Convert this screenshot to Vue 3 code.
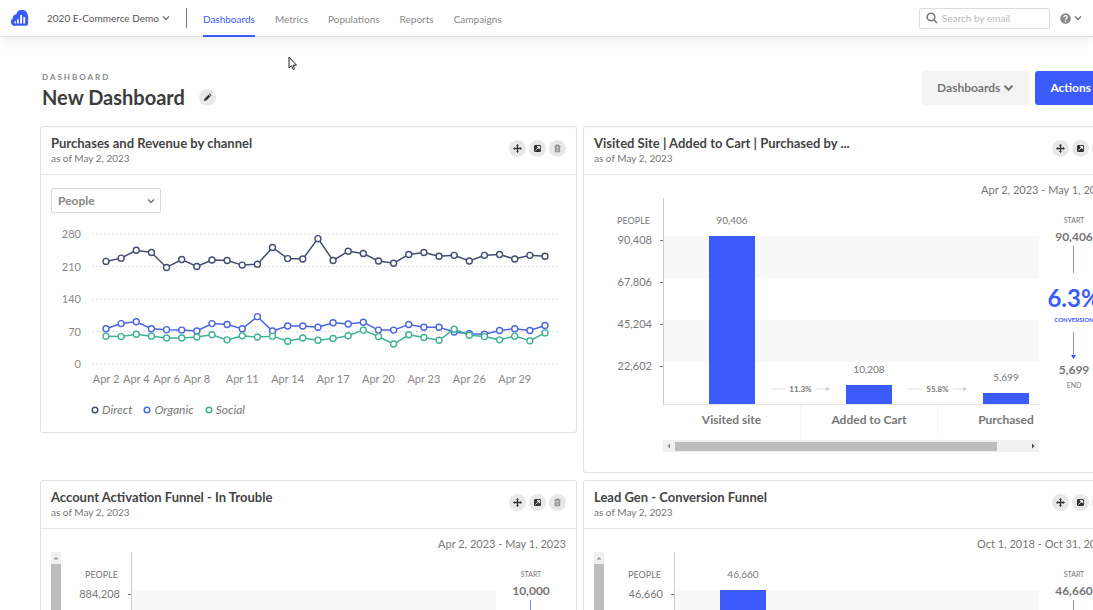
<script setup>
import { ref } from 'vue'

const navItems = ['Dashboards', 'Metrics', 'Populations', 'Reports', 'Campaigns']
const measure = ref('People')
const search = ref('')

const series = [
  {
    name: 'Organic',
    color: '#4a66e0',
    values: [76, 87, 91, 76, 74, 73, 71, 87, 85, 76, 102, 71, 82, 82, 79, 89, 86, 90, 73, 73, 85, 79, 79, 69, 65, 64, 72, 76, 72, 83]
  },
  {
    name: 'Social',
    color: '#3fb394',
    values: [60, 59, 64, 60, 56, 56, 58, 63, 52, 61, 58, 60, 49, 56, 51, 55, 61, 73, 59, 43, 63, 57, 51, 75, 62, 59, 52, 60, 50, 67]
  },
  {
    name: 'Direct',
    color: '#434c72',
    values: [221, 228, 245, 240, 208, 225, 210, 224, 223, 213, 215, 251, 227, 226, 270, 223, 243, 238, 222, 217, 236, 240, 232, 234, 222, 234, 236, 226, 234, 232]
  }
]
const legend = [series[2], series[0], series[1]]
const yTicks = [280, 210, 140, 70, 0]
const labelledDays = [2, 4, 6, 8, 11, 14, 17, 20, 23, 26, 29]

const dayX = (day) => 55 + ((day - 2) * 439) / 29
const valueY = (value) => 140 - (value * 130) / 280
const linePoints = (values) => values.map((v, i) => `${dayX(i + 2)},${valueY(v)}`).join(' ')

const funnels = [
  {
    title: 'Visited Site | Added to Cart | Purchased by ...',
    range: 'Apr 2, 2023 - May 1, 2023',
    ticks: ['90,408', '67,806', '45,204', '22,602'],
    max: 90408,
    steps: [
      { name: 'Visited site', label: '90,406', value: 90406, next: '11.3%' },
      { name: 'Added to Cart', label: '10,208', value: 10208, next: '55.8%' },
      { name: 'Purchased', label: '5,699', value: 5699 }
    ],
    start: '90,406',
    rate: '6.3%',
    end: '5,699',
    tall: false
  },
  {
    title: 'Account Activation Funnel - In Trouble',
    range: 'Apr 2, 2023 - May 1, 2023',
    ticks: ['884,208'],
    max: 884208,
    steps: [],
    start: '10,000',
    tall: true
  },
  {
    title: 'Lead Gen - Conversion Funnel',
    range: 'Oct 1, 2018 - Oct 31, 2018',
    ticks: ['46,660'],
    max: 46660,
    steps: [{ name: '', label: '46,660', value: 46660 }],
    start: '46,660',
    tall: true
  }
]
const barHeight = (funnel, step) => `${Math.round((step.value / funnel.max) * 168)}px`
</script>

<template>
  <div class="page">
    <header class="topbar">
      <a class="logo" href="#" aria-label="Home">
        <svg width="18" height="18" viewBox="0 0 18 18">
          <path d="M4.500 16.800A4 4 0 0 1 1.800 9.400A4 4 0 0 1 5.300 5.300A5.700 5.700 0 0 1 16.300 4.600Q17.200 6.500 17.200 9V14.300Q17.200 16.800 14.700 16.800Z" fill="#3b5bfd" />
          <path d="M6.900 14.500V10.500M10.100 14.500V6M13.200 14.500V8" stroke="#fff" stroke-width="1.800" fill="none" />
          <path d="M4.200 14.500v-2.300" stroke="#fff" stroke-width="1.300" />
        </svg>
      </a>
      <button class="project" type="button">
        2020 E-Commerce Demo
        <svg width="8" height="6" viewBox="0 0 8 6"><path d="M1 1.500l3 3 3-3" class="chev" /></svg>
      </button>
      <nav class="nav">
        <a v-for="(item, i) in navItems" :key="item" href="#" :class="{ active: i === 0 }">{{ item }}</a>
      </nav>
      <label class="search">
        <svg width="12" height="12" viewBox="0 0 12 12"><circle cx="5" cy="5" r="3.800" /><path d="M8 8l3 3" /></svg>
        <input v-model="search" type="text" placeholder="Search by email" aria-label="Search by email" />
      </label>
      <button class="help" type="button" aria-label="Help">
        <svg width="11" height="11" viewBox="0 0 11 11">
          <circle cx="5.500" cy="5.500" r="5.300" fill="#888" />
          <path d="M3.800 4.300a1.700 1.600 0 1 1 2.500 1.300q-.8.400-.8 1.100" fill="none" stroke="#fff" stroke-width="1.300" />
          <circle cx="5.500" cy="8.300" r=".8" fill="#fff" />
        </svg>
        <svg width="8" height="6" viewBox="0 0 8 6"><path d="M1 1.500l3 3 3-3" class="chev" /></svg>
      </button>
    </header>

    <main class="content">
      <section class="heading">
        <div class="heading-text">
          <p>DASHBOARD</p>
          <div class="title-row">
            <h1>New Dashboard</h1>
            <button class="round" type="button" aria-label="Rename">
              <svg width="9" height="9" viewBox="0 0 9 9"><path d="M1 8l.5-2.300 4-4 1.800 1.800-4 4zM6 1.200l.7-.7 1.800 1.800-.7.700z" fill="#333" /></svg>
            </button>
          </div>
        </div>
        <button class="btn" type="button">
          Dashboards
          <svg width="11" height="8" viewBox="0 0 11 8"><path d="M1.500 1.800l4 4 4-4" fill="none" stroke="currentColor" stroke-width="2.200" /></svg>
        </button>
        <button class="btn primary" type="button">
          Actions
          <svg width="11" height="8" viewBox="0 0 11 8"><path d="M1.500 1.800l4 4 4-4" fill="none" stroke="currentColor" stroke-width="2.200" /></svg>
        </button>
      </section>

      <div class="grid">
        <article class="card">
          <div class="card-head">
            <div>
              <h2>Purchases and Revenue by channel</h2>
              <p>as of May 2, 2023</p>
            </div>
            <div class="tools">
              <button class="round" type="button" aria-label="Move">
                <svg width="9" height="9" viewBox="0 0 9 9"><path d="M4.500 1v7M1 4.500h7" stroke="#333" stroke-width="1.300" /><path d="M4.500 0L6 1.800H3zM4.500 9L6 7.200H3zM0 4.500L1.800 3v3zM9 4.500L7.200 3v3z" fill="#333" /></svg>
              </button>
              <button class="round" type="button" aria-label="Open">
                <svg width="9" height="9" viewBox="0 0 9 9"><rect x="1" y="1" width="7" height="7" rx="1.300" fill="#333" /><path d="M4 2.400h2.700V5zM2.500 6.500L5.500 3.500" fill="#fff" stroke="#fff" stroke-width=".8" /></svg>
              </button>
              <button class="round" type="button" aria-label="Delete">
                <svg width="9" height="9" viewBox="0 0 9 9"><path d="M1.500 2.200h6M3.300 2V1h2.400v1M2.300 2.500v5.300h4.400V2.500M3.800 3.500v3.300M5.200 3.500v3.300" fill="none" stroke="#777" stroke-width=".9" /></svg>
              </button>
            </div>
          </div>

          <div class="trend">
            <div class="select">
              <select v-model="measure" aria-label="Measure">
                <option>People</option>
                <option>Revenue</option>
              </select>
              <svg width="8" height="6" viewBox="0 0 8 6"><path d="M1 1.500l3 3 3-3" class="chev" /></svg>
            </div>
            <svg class="plot-lines" viewBox="0 0 515 168">
              <g v-for="tick in yTicks" :key="tick">
                <line x1="41" x2="509" :y1="valueY(tick)" :y2="valueY(tick)" class="grid-line" />
                <text x="30" :y="valueY(tick) + 4" text-anchor="end">{{ tick }}</text>
              </g>
              <text v-for="day in labelledDays" :key="day" :x="dayX(day)" y="159" text-anchor="middle">Apr {{ day }}</text>
              <g v-for="line in series" :key="line.name" :stroke="line.color">
                <polyline :points="linePoints(line.values)" fill="none" stroke-width="1.500" />
                <circle v-for="(v, i) in line.values" :key="i" :cx="dayX(i + 2)" :cy="valueY(v)" r="3" fill="#fff" stroke-width="1.400" />
              </g>
            </svg>
            <ul class="legend">
              <li v-for="line in legend" :key="line.name">
                <svg width="8" height="8" viewBox="0 0 8 8"><circle cx="4" cy="4" r="2.800" fill="#fff" :stroke="line.color" stroke-width="1.500" /></svg>
                {{ line.name }}
              </li>
            </ul>
          </div>
        </article>

        <article v-for="funnel in funnels" :key="funnel.title" class="card">
          <div class="card-head">
            <div>
              <h2>{{ funnel.title }}</h2>
              <p>as of May 2, 2023</p>
            </div>
            <div class="tools">
              <button class="round" type="button" aria-label="Move">
                <svg width="9" height="9" viewBox="0 0 9 9"><path d="M4.500 1v7M1 4.500h7" stroke="#333" stroke-width="1.300" /><path d="M4.500 0L6 1.800H3zM4.500 9L6 7.200H3zM0 4.500L1.800 3v3zM9 4.500L7.200 3v3z" fill="#333" /></svg>
              </button>
              <button class="round" type="button" aria-label="Open">
                <svg width="9" height="9" viewBox="0 0 9 9"><rect x="1" y="1" width="7" height="7" rx="1.300" fill="#333" /><path d="M4 2.400h2.700V5zM2.500 6.500L5.500 3.500" fill="#fff" stroke="#fff" stroke-width=".8" /></svg>
              </button>
              <button class="round" type="button" aria-label="Delete">
                <svg width="9" height="9" viewBox="0 0 9 9"><path d="M1.500 2.200h6M3.300 2V1h2.400v1M2.300 2.500v5.300h4.400V2.500M3.800 3.500v3.300M5.200 3.500v3.300" fill="none" stroke="#777" stroke-width=".9" /></svg>
              </button>
            </div>
          </div>

          <p class="range">{{ funnel.range }}</p>
          <div class="funnel" :class="{ tall: funnel.tall }">
            <div v-if="funnel.tall" class="vbar">
              <svg width="10" height="12" viewBox="0 0 10 12"><path d="M2.500 7.500h5L5 5z" fill="#999" /></svg>
              <i></i>
            </div>
            <div class="axis">
              <span class="unit">PEOPLE</span>
              <span v-for="tick in funnel.ticks" :key="tick" class="tick">{{ tick }}</span>
            </div>
            <div class="stage">
              <div class="plot">
                <div class="bars">
                  <template v-for="step in funnel.steps" :key="step.name">
                    <div class="bar">
                      <span>{{ step.label }}</span>
                      <i :style="{ height: barHeight(funnel, step) }"></i>
                    </div>
                    <div v-if="step.next" class="flow">
                      <svg width="14" height="6" viewBox="0 0 14 6"><path d="M0 3h14" stroke="#ddd" /></svg>
                      {{ step.next }}
                      <svg width="14" height="6" viewBox="0 0 14 6"><path d="M0 3h11" stroke="#ddd" /><path d="M10 1l4 2-4 2z" fill="#ccc" /></svg>
                    </div>
                  </template>
                </div>
              </div>
              <div v-if="!funnel.tall" class="names">
                <span v-for="step in funnel.steps" :key="step.name">{{ step.name }}</span>
              </div>
              <div v-if="!funnel.tall" class="hbar">
                <svg width="12" height="12" viewBox="0 0 12 12"><path d="M7 3.500v5L4.500 6z" fill="#888" /></svg>
                <i></i>
                <svg width="12" height="12" viewBox="0 0 12 12"><path d="M5 3.500v5L7.500 6z" fill="#444" /></svg>
              </div>
            </div>
            <div class="summary">
              <small>START</small>
              <b>{{ funnel.start }}</b>
              <svg width="6" height="27" viewBox="0 0 6 27"><path d="M2.500 0v27" stroke="#7f95fb" /></svg>
              <template v-if="funnel.rate">
                <strong>{{ funnel.rate }}</strong>
                <small class="blue">CONVERSION</small>
                <svg class="down" width="6" height="27" viewBox="0 0 6 27"><path d="M2.500 0v24" stroke="#7f95fb" /><path d="M0 23h5l-2.500 4z" fill="#3b5bfd" /></svg>
                <b>{{ funnel.end }}</b>
                <small class="end">END</small>
              </template>
            </div>
          </div>
        </article>
      </div>
    </main>

    <svg class="pointer" width="10" height="16" viewBox="0 0 10 16"><path d="M1 1v11l2.500-2.300 1.700 3.800 1.500-.7L5 9.200h3.500z" fill="#fff" stroke="#222" /></svg>
  </div>
</template>

<style>
body {
  margin: 0;
  background: #fff;
}
</style>

<style scoped>
.page {
  position: relative;
  height: 100vh;
  overflow: hidden;
  font-family: Lato, "Open Sans", sans-serif;
  font-size: 11px;
  line-height: 14px;
  color: #777;
}
.page * {
  box-sizing: border-box;
}
h1, h2, p, ul {
  margin: 0;
  padding: 0;
}
button, input, select {
  font: inherit;
  color: inherit;
  border: 0;
  padding: 0;
  background: none;
}
button {
  cursor: pointer;
}
svg {
  display: block;
  flex: none;
}
.chev {
  fill: none;
  stroke: #777;
  stroke-width: 1.500;
}
.topbar {
  display: flex;
  align-items: center;
  height: 37px;
  padding: 0 11px;
  border-bottom: 1px solid #dedede;
  box-shadow: 0 4px 12px rgba(0, 0, 0, 0.07);
}
.project {
  display: flex;
  align-items: center;
  gap: 3px;
  height: 20px;
  margin-left: 18px;
  padding-right: 16px;
  border-right: 1px solid #777;
  font-size: 10px;
  color: #555;
}
.nav {
  display: flex;
  align-self: stretch;
  gap: 20px;
  margin-left: 16px;
  font-size: 10px;
}
.nav a {
  display: flex;
  align-items: center;
  padding-top: 2px;
  height: 37px;
  color: #888;
  text-decoration: none;
  border-bottom: 2px solid transparent;
}
.nav a.active {
  color: #3b5bfd;
  border-color: #3b5bfd;
}
.search {
  display: flex;
  align-items: center;
  gap: 4px;
  width: 131px;
  height: 21px;
  margin-left: auto;
  padding: 0 6px;
  border: 1px solid #ddd;
  border-radius: 2px;
  font-size: 10px;
}
.search svg {
  fill: none;
  stroke: #777;
  stroke-width: 1.600;
}
.search input {
  flex: 1;
  min-width: 0;
  outline: 0;
}
.search input::placeholder {
  color: #bbb;
}
.help {
  display: flex;
  align-items: center;
  gap: 3px;
  margin-left: 10px;
}
.content {
  min-width: 1160px;
  padding: 34px 40px 0;
}
.heading {
  display: flex;
  gap: 6px;
  padding-left: 2px;
}
.heading-text {
  margin-right: auto;
}
.heading-text p {
  font-size: 8px;
  line-height: 12px;
  font-weight: 700;
  letter-spacing: 2px;
  color: #888;
}
.title-row {
  display: flex;
  align-items: center;
  gap: 14px;
}
h1 {
  font-size: 20px;
  line-height: 28px;
  color: #3c3c3c;
}
.round {
  display: flex;
  align-items: center;
  justify-content: center;
  width: 17px;
  height: 17px;
  border-radius: 50%;
  background: #e8e8e8;
}
.btn {
  display: flex;
  align-items: center;
  gap: 3px;
  height: 34px;
  padding: 0 15px;
  border-radius: 3px;
  background: #f3f3f3;
  font-size: 12px;
  font-weight: 700;
}
.btn.primary {
  background: #3b5bfd;
  color: #fff;
}
.grid {
  display: grid;
  grid-template-columns: 1fr 1fr;
  align-items: start;
  gap: 7px 6px;
  margin-top: 15px;
}
.card {
  min-width: 0;
  border: 1px solid #e2e2e2;
  border-radius: 3px;
}
.card-head {
  display: flex;
  justify-content: space-between;
  height: 48px;
  padding: 8px 10px 0;
  border-bottom: 1px solid #e8e8e8;
}
h2 {
  font-size: 13px;
  line-height: 16px;
  color: #444;
}
.card-head p {
  font-size: 10px;
}
.tools {
  display: flex;
  gap: 3px;
  padding-top: 5px;
}
.trend {
  padding: 13px 10px 15px;
}
.select {
  display: grid;
  grid-template-columns: 1fr 14px;
  align-items: center;
  width: 110px;
}
.select select {
  grid-area: 1 / 1 / 2 / 3;
  height: 25px;
  padding: 0 6px;
  border: 1px solid #d8d8d8;
  border-radius: 2px;
  appearance: none;
  font-size: 12px;
  font-weight: 700;
  color: #888;
}
.select svg {
  grid-area: 1 / 2;
  pointer-events: none;
}
.plot-lines {
  width: 100%;
  margin-top: 11px;
}
.plot-lines text {
  font-size: 11px;
  fill: #888;
}
.grid-line {
  stroke: #ddd;
  stroke-dasharray: 2 2;
}
.legend {
  display: flex;
  gap: 11px;
  margin-top: 11px;
  padding-left: 40px;
  list-style: none;
  font-size: 12px;
  font-style: italic;
}
.legend li {
  display: flex;
  align-items: center;
  gap: 3px;
}
.range {
  padding: 8px 10px 1px 0;
  text-align: right;
  font-size: 11px;
}
.funnel {
  display: flex;
  min-height: 274px;
  padding: 0 10px;
}
.vbar {
  display: flex;
  flex-direction: column;
  width: 10px;
  background: #f0f0f0;
}
.vbar i {
  flex: 1;
  background: #bdbdbd;
}
.axis {
  display: flex;
  flex-direction: column;
  width: 69px;
  padding-top: 16px;
}
.tall .axis {
  width: 70px;
}
.unit {
  padding-right: 13px;
  text-align: right;
  font-size: 9px;
}
.tick {
  display: flex;
  align-items: center;
  justify-content: flex-end;
  gap: 8px;
  height: 14px;
  margin: 5px 0 23px;
  font-size: 11px;
}
.tick::after {
  content: "";
  width: 3px;
  height: 1px;
  background: #777;
}
.stage {
  flex: 1;
  min-width: 0;
  overflow: hidden;
}
.plot {
  height: 207px;
  padding-top: 38px;
  border-left: 1px solid #ccc;
  border-bottom: 1px solid #e2e2e2;
}
.bars {
  display: flex;
  align-items: flex-end;
  height: 168px;
  padding-left: 45px;
  background: repeating-linear-gradient(#f8f8f8 0 42px, #fff 42px 84px);
}
.bar {
  display: flex;
  flex: none;
  flex-direction: column;
  align-items: center;
  gap: 9px;
  width: 46px;
  font-size: 10px;
}
.bar i {
  width: 100%;
  background: #3b5bfd;
}
.flow {
  display: flex;
  flex: none;
  align-items: center;
  justify-content: center;
  gap: 4px;
  width: 91px;
  padding-bottom: 8px;
  font-size: 8px;
  font-weight: 700;
}
.names {
  display: flex;
  height: 34px;
  line-height: 30px;
  font-size: 12px;
  font-weight: 700;
}
.names span {
  flex: none;
  width: 137px;
  text-align: center;
}
.names span + span {
  border-left: 1px solid #f3f3f3;
}
.hbar {
  display: flex;
  align-items: center;
  height: 12px;
  margin-top: 1px;
  background: #f0f0f0;
}
.hbar i {
  flex: 1;
  height: 9px;
  margin-right: 8%;
  background: #bdbdbd;
}
.summary {
  display: flex;
  flex-direction: column;
  align-items: center;
  width: 70px;
  padding-top: 16px;
}
.summary small {
  font-size: 7px;
  line-height: 12px;
}
.summary b {
  margin: 4px 0 2px;
  font-size: 12px;
}
.summary strong {
  margin: 10px 0 2px;
  font-size: 24px;
  line-height: 29px;
  color: #3b5bfd;
}
.summary small.blue {
  font-size: 6px;
  font-weight: 700;
  color: #3b5bfd;
}
.down {
  margin-top: 6px;
}
.pointer {
  position: absolute;
  left: 288px;
  top: 56px;
}
</style>
